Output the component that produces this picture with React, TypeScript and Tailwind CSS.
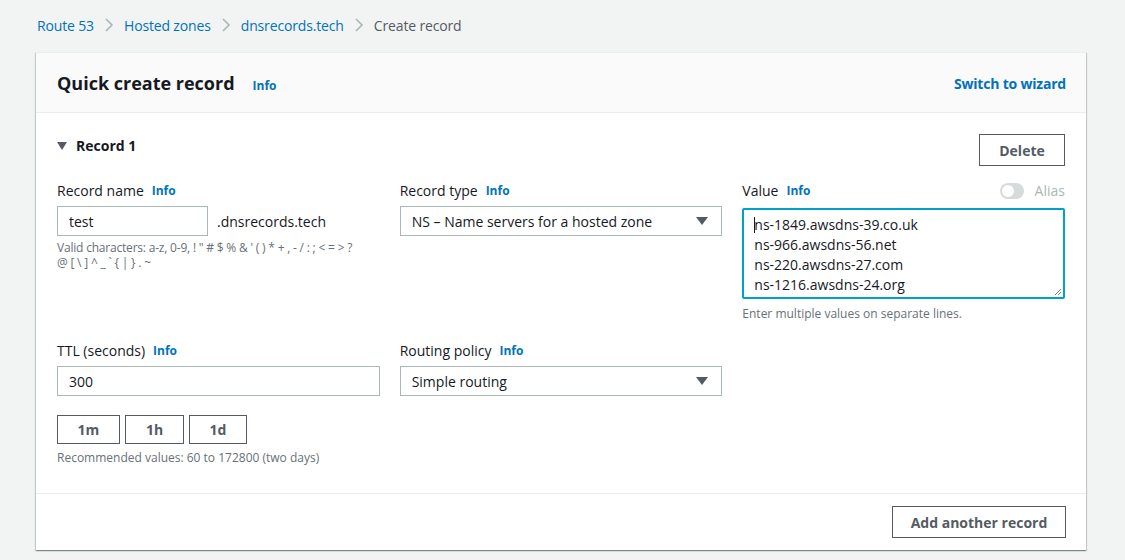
import React from "react";

const Info = () => (
  <span className="ml-2 text-[12px] font-bold text-[#0073bb]">Info</span>
);

const Caret = () => (
  <svg width="12" height="8" viewBox="0 0 12 8" className="shrink-0">
    <path d="M0 0 L12 0 L6 8 Z" fill="#545b64" />
  </svg>
);

const Chevron = () => (
  <span className="mx-[10px]">
    <svg width="10" height="14" viewBox="0 0 10 14">
      <path d="M2 1 L8 7 L2 13" fill="none" stroke="#aab7b8" strokeWidth="1.6" />
    </svg>
  </span>
);

const Select = ({ value }: { value: string }) => (
  <div className="flex h-[30px] items-center justify-between border border-[#aab7b8] bg-white pl-[11px] pr-[13px] text-[14px] text-[#16191f]">
    <span>{value}</span>
    <Caret />
  </div>
);

const Label = ({ text }: { text: string }) => (
  <div className="mb-[6px] flex items-center text-[14px] leading-[18px] text-[#16191f]">
    {text}
    <Info />
  </div>
);

const OutlineButton = ({ children, className = "" }: { children: React.ReactNode; className?: string }) => (
  <button className={`flex items-center justify-center border border-[#545b64] bg-white text-[14px] font-bold text-[#545b64] ${className}`}>
    {children}
  </button>
);

export default function App() {
  const servers = [
    "ns-1849.awsdns-39.co.uk",
    "ns-966.awsdns-56.net",
    "ns-220.awsdns-27.com",
    "ns-1216.awsdns-24.org",
  ];

  return (
    <div className="h-[560px] w-[1125px] overflow-hidden bg-[#f2f3f3] font-['Open_Sans',sans-serif] text-[#16191f]">
      <nav className="flex h-[50px] items-center pl-[37px] text-[14px] tracking-[-0.15px]">
        <a className="text-[#0073bb]">Route 53</a>
        <Chevron />
        <a className="text-[#0073bb]">Hosted zones</a>
        <Chevron />
        <a className="text-[#0073bb]">dnsrecords.tech</a>
        <Chevron />
        <span className="text-[#545b64]">Create record</span>
      </nav>

      <section className="ml-[36px] mt-[2px] w-[1050px] border-t border-[#eaeded] bg-white shadow-[0_1px_1px_0_rgba(0,28,36,0.3),1px_1px_1px_0_rgba(0,28,36,0.15),-1px_1px_1px_0_rgba(0,28,36,0.15)]">
        <header className="flex h-[60px] items-center justify-between border-b border-[#eaeded] bg-[#fafafa] pl-[21px] pr-[20px] pt-[2px]">
          <div className="flex items-baseline">
            <h1 className="text-[18px] font-bold">Quick create record</h1>
            <span className="ml-[18px] text-[12px] font-bold text-[#0073bb]">Info</span>
          </div>
          <a className="text-[14px] font-bold tracking-[-0.2px] text-[#0073bb]">Switch to wizard</a>
        </header>

        <div className="border-b border-[#eaeded] px-[21px] pb-[26px] pt-[21px]">
          <div className="flex items-start justify-between">
            <div className="mt-[1px] flex items-center text-[14px] font-bold">
              <svg width="10" height="8" viewBox="0 0 10 8" className="mr-[9px]">
                <path d="M0 0 L10 0 L5 8 Z" fill="#545b64" />
              </svg>
              Record 1
            </div>
            <OutlineButton className="h-[32px] w-[86px]">Delete</OutlineButton>
          </div>

          <div className="mt-[16px] grid grid-cols-3 gap-x-[20px]">
            <div>
              <Label text="Record name" />
              <div className="flex items-center">
                <div className="flex h-[30px] w-[151px] items-center border border-[#aab7b8] px-[11px] text-[14px]">test</div>
                <span className="ml-[9px] text-[14px]">.dnsrecords.tech</span>
              </div>
              <p className="mt-[4px] text-[12px] leading-[15px] tracking-[-0.2px] text-[#687078]">
                Valid characters: a-z, 0-9, ! " # $ % &amp; ' ( ) * + , - / : ; &lt; = &gt; ?
                <br />
                @ [ \ ] ^ _ ` {"{"} | {"}"} . ~
              </p>
            </div>
            <div>
              <Label text="Record type" />
              <Select value="NS – Name servers for a hosted zone" />
            </div>
            <div>
              <div className="mb-[8px] flex items-center justify-between text-[14px] leading-[18px]">
                <div className="flex items-center">
                  Value
                  <Info />
                </div>
                <div className="flex items-center">
                  <span className="relative mr-[11px] h-[16px] w-[24px] rounded-full bg-[#d5dbdb]">
                    <span className="absolute left-[2px] top-[2px] h-[12px] w-[12px] rounded-full bg-white" />
                  </span>
                  <span className="text-[#aab7b8]">Alias</span>
                </div>
              </div>
              <div className="relative h-[91px] rounded-[2px] border-2 border-[#00a1c9] px-[10px] pt-[5px] text-[14px] leading-[20px]">
                {servers.map((s, i) => (
                  <div key={s} className="flex items-center">
                    {i === 0 && <span className="mr-[-1px] h-[16px] w-px bg-[#16191f]" />}
                    {s}
                  </div>
                ))}
                <svg width="8" height="8" viewBox="0 0 8 8" className="absolute bottom-[1px] right-[1px]">
                  <path d="M7 1 L1 7 M7 4 L4 7" stroke="#545b64" strokeWidth="0.8" />
                </svg>
              </div>
              <p className="mt-[6px] text-[12px] text-[#687078]">Enter multiple values on separate lines.</p>
            </div>
          </div>

          <div className="mt-[19px] grid grid-cols-3 gap-x-[20px]">
            <div>
              <Label text="TTL (seconds)" />
              <div className="flex h-[30px] items-center border border-[#aab7b8] px-[11px] text-[14px]">300</div>
              <div className="mt-[19px] flex gap-[5px]">
                <OutlineButton className="h-[29px] w-[63px]">1m</OutlineButton>
                <OutlineButton className="h-[29px] w-[59px]">1h</OutlineButton>
                <OutlineButton className="h-[29px] w-[58px]">1d</OutlineButton>
              </div>
              <p className="mt-[5px] text-[12px] text-[#687078]">Recommended values: 60 to 172800 (two days)</p>
            </div>
            <div>
              <Label text="Routing policy" />
              <Select value="Simple routing" />
            </div>
            <div />
          </div>
        </div>

        <footer className="flex h-[56px] items-center justify-end pr-[20px]">
          <OutlineButton className="h-[32px] w-[174px]">Add another record</OutlineButton>
        </footer>
      </section>
    </div>
  );
}
